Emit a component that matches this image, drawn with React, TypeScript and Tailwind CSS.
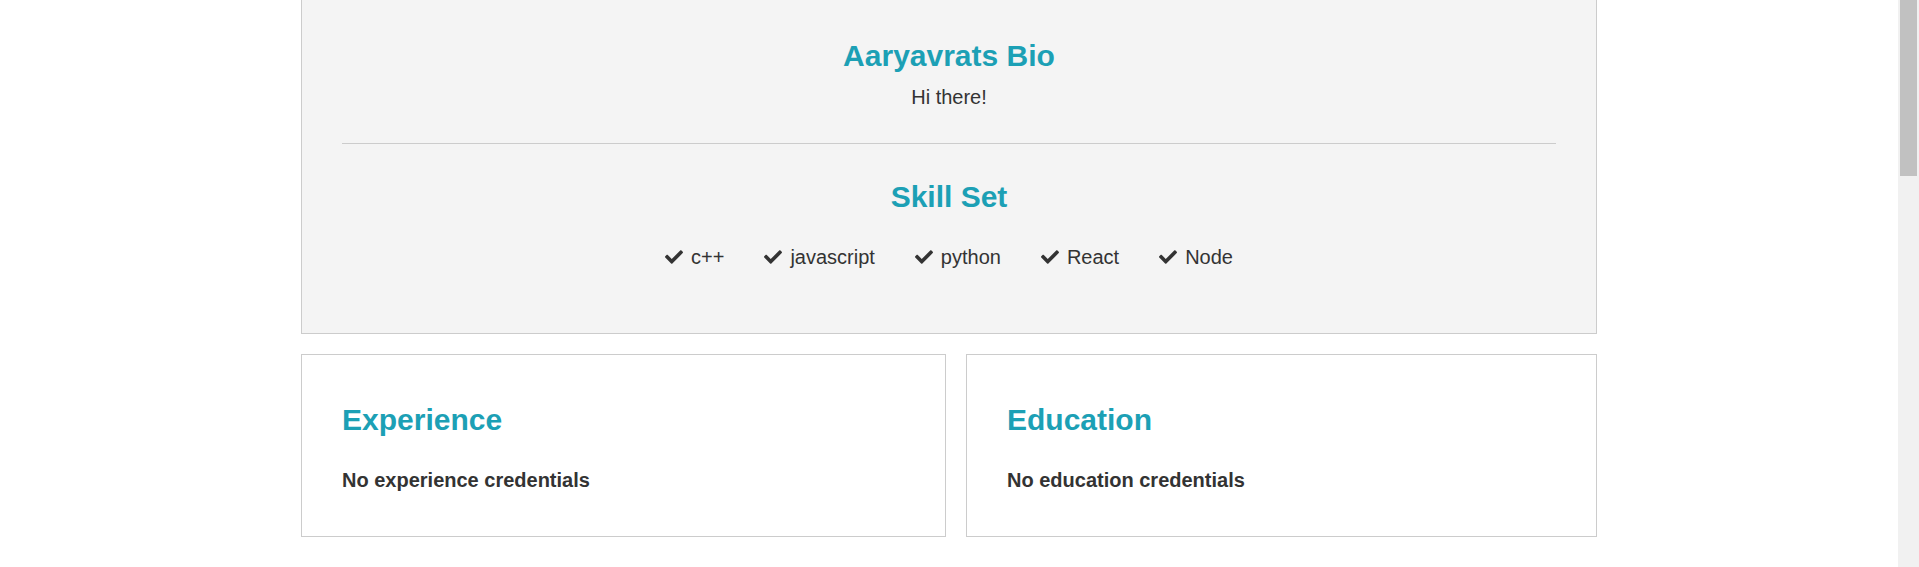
import React from "react";
import { FaCheck } from "react-icons/fa";

const skills = ["c++", "javascript", "python", "React", "Node"];

export default function App() {
  return (
    <div
      className="flex h-[567px] w-full overflow-hidden bg-white text-[#333]"
      style={{ fontFamily: '"Liberation Sans", Arial, sans-serif' }}
    >
      <div className="flex-1">
        <div className="mx-auto w-[1296px]">
          <div className="border border-t-0 border-[#ccc] bg-[#f4f4f4] px-10 pt-[38px] pb-[61px] text-center">
            <h1 className="text-[30px] font-bold leading-[36px] text-[#1ca0b5]">
              Aaryavrats Bio
            </h1>
            <p className="mt-2 text-[20px] leading-[30px]">Hi there!</p>
            <div className="mt-[31px] h-px bg-[#ccc]" />
            <h2 className="mt-[35px] text-[30px] font-bold leading-[36px] text-[#1ca0b5]">
              Skill Set
            </h2>
            <div className="mt-[27px] flex justify-center gap-10 text-[20px] leading-[30px]">
              {skills.map((s) => (
                <div key={s} className="flex items-center gap-2">
                  <FaCheck size={18} className="text-[#333]" />
                  <span>{s}</span>
                </div>
              ))}
            </div>
          </div>
          <div className="mt-[20px] flex gap-[20px]">
            <div className="w-[645px] border border-[#ccc] bg-white px-10 pt-[47px] pb-[41px]">
              <h2 className="text-[30px] font-bold leading-[36px] text-[#1ca0b5]">
                Experience
              </h2>
              <p className="mt-[27px] text-[20px] font-bold leading-[30px] text-[#333]">
                No experience credentials
              </p>
            </div>
            <div className="flex-1 border border-[#ccc] bg-white px-10 pt-[47px] pb-[41px]">
              <h2 className="text-[30px] font-bold leading-[36px] text-[#1ca0b5]">
                Education
              </h2>
              <p className="mt-[27px] text-[20px] font-bold leading-[30px] text-[#333]">
                No education credentials
              </p>
            </div>
          </div>
        </div>
      </div>
      <div className="flex w-[21px] flex-col bg-[#f1f1f1] pl-[2px] pr-[2px]">
        <div className="h-[176px] w-full bg-[#c1c1c1]" />
      </div>
    </div>
  );
}
